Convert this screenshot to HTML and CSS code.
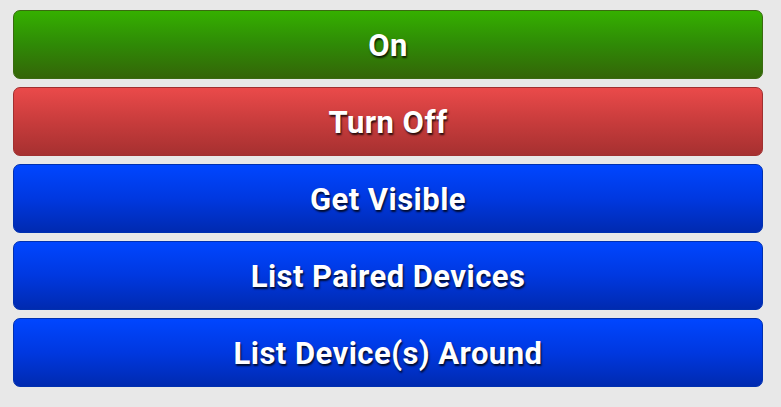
FILE: index.html
```html
<!DOCTYPE html>
<html>
<head>
<meta charset="utf-8">
<link rel="stylesheet" href="styles.css">
</head>
<body>
<div class="stack">
  <button class="btn btn-green">On</button>
  <button class="btn btn-red">Turn Off</button>
  <button class="btn btn-blue">Get Visible</button>
  <button class="btn btn-blue">List Paired Devices</button>
  <button class="btn btn-blue">List Device(s) Around</button>
</div>
</body>
</html>
```

FILE: styles.css
```css
html, body {
  margin: 0;
  padding: 0;
  background: #e8e8e8;
  width: 781px;
  height: 407px;
  overflow: hidden;
}
.stack {
  display: flex;
  flex-direction: column;
  gap: 8px;
  padding: 10px 0 0 13px;
  width: 750px;
}
.btn {
  height: 69px;
  width: 750px;
  margin: 0;
  padding: 2px 0 0 0;
  border-radius: 7px;
  font-family: Roboto, "Liberation Sans", sans-serif;
  font-weight: bold;
  font-size: 31px;
  letter-spacing: 0.45px;
  color: #ffffff;
  text-shadow: 1px 2px 2px rgba(0,0,0,0.8);
  display: flex;
  align-items: center;
  justify-content: center;
  box-sizing: border-box;
}
.btn-green {
  background: linear-gradient(to bottom, #35b000 0%, #2f8a06 50%, #346508 100%);
  border: 1px solid #3a6a10;
}
.btn-red {
  background: linear-gradient(to bottom, #ea4a4a 0%, #c83c3c 50%, #a63030 100%);
  border: 1px solid #a03030;
}
.btn-blue {
  background: linear-gradient(to bottom, #0046ff 0%, #0038e0 50%, #002ab0 100%);
  border: 1px solid #0030b0;
}
```
